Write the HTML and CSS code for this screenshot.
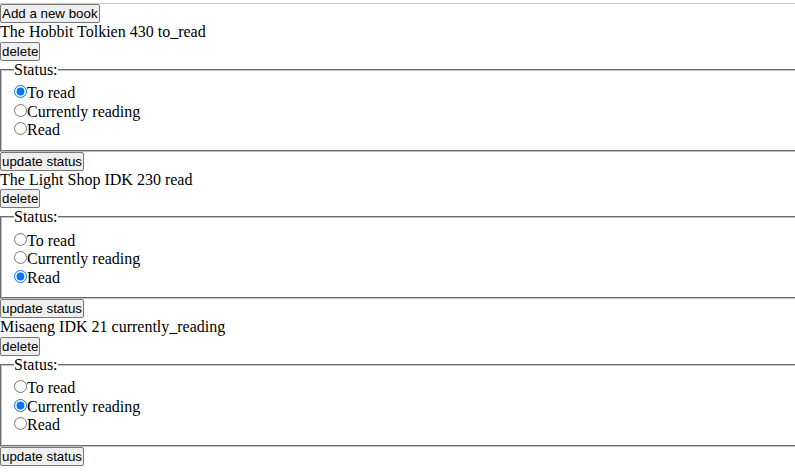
FILE: index.html
```html
<!DOCTYPE html>
<html>
<head>
<meta charset="utf-8">
<link rel="stylesheet" href="styles.css">
</head>
<body>
<div class="topbar"></div>
<button class="btn">Add a new book</button>

<div class="book">
  <div class="info">The Hobbit Tolkien 430 to_read</div>
  <button class="btn">delete</button>
  <fieldset class="status">
    <legend>Status:</legend>
    <div class="opt"><input type="radio" name="s1" checked>To read</div>
    <div class="opt"><input type="radio" name="s1">Currently reading</div>
    <div class="opt"><input type="radio" name="s1">Read</div>
  </fieldset>
  <button class="btn">update status</button>
</div>

<div class="book">
  <div class="info">The Light Shop IDK 230 read</div>
  <button class="btn">delete</button>
  <fieldset class="status">
    <legend>Status:</legend>
    <div class="opt"><input type="radio" name="s2">To read</div>
    <div class="opt"><input type="radio" name="s2">Currently reading</div>
    <div class="opt"><input type="radio" name="s2" checked>Read</div>
  </fieldset>
  <button class="btn">update status</button>
</div>

<div class="book">
  <div class="info">Misaeng IDK 21 currently_reading</div>
  <button class="btn">delete</button>
  <fieldset class="status">
    <legend>Status:</legend>
    <div class="opt"><input type="radio" name="s3">To read</div>
    <div class="opt"><input type="radio" name="s3" checked>Currently reading</div>
    <div class="opt"><input type="radio" name="s3">Read</div>
  </fieldset>
  <button class="btn">update status</button>
</div>
</body>
</html>
```

FILE: styles.css
```css
* {
  margin: 0;
  padding: 0;
}
body {
  font-family: "Liberation Serif", serif;
  font-size: 16px;
  color: #000;
  background: #fff;
  overflow-x: hidden;
}
.topbar {
  height: 3px;
  border-bottom: 1px solid #c8c8c8;
}
.btn {
  display: block;
  font-family: "Liberation Sans", Arial, sans-serif;
  font-size: 13.333px;
  padding: 1px 1px;
  border: 1px solid #767676;
  border-radius: 2px;
  background: #efefef;
  color: #000;
}
.info {
  line-height: 18.5px;
}
.status {
  border: 2px groove #c0c0c0;
  padding: 0.35em 0.75em 0.625em;
  margin: 0 -2px 0 0;
}
.status legend {
  padding: 0;
}
.opt {
  line-height: 18.5px;
}
.opt input {
  margin: 0;
}
```
